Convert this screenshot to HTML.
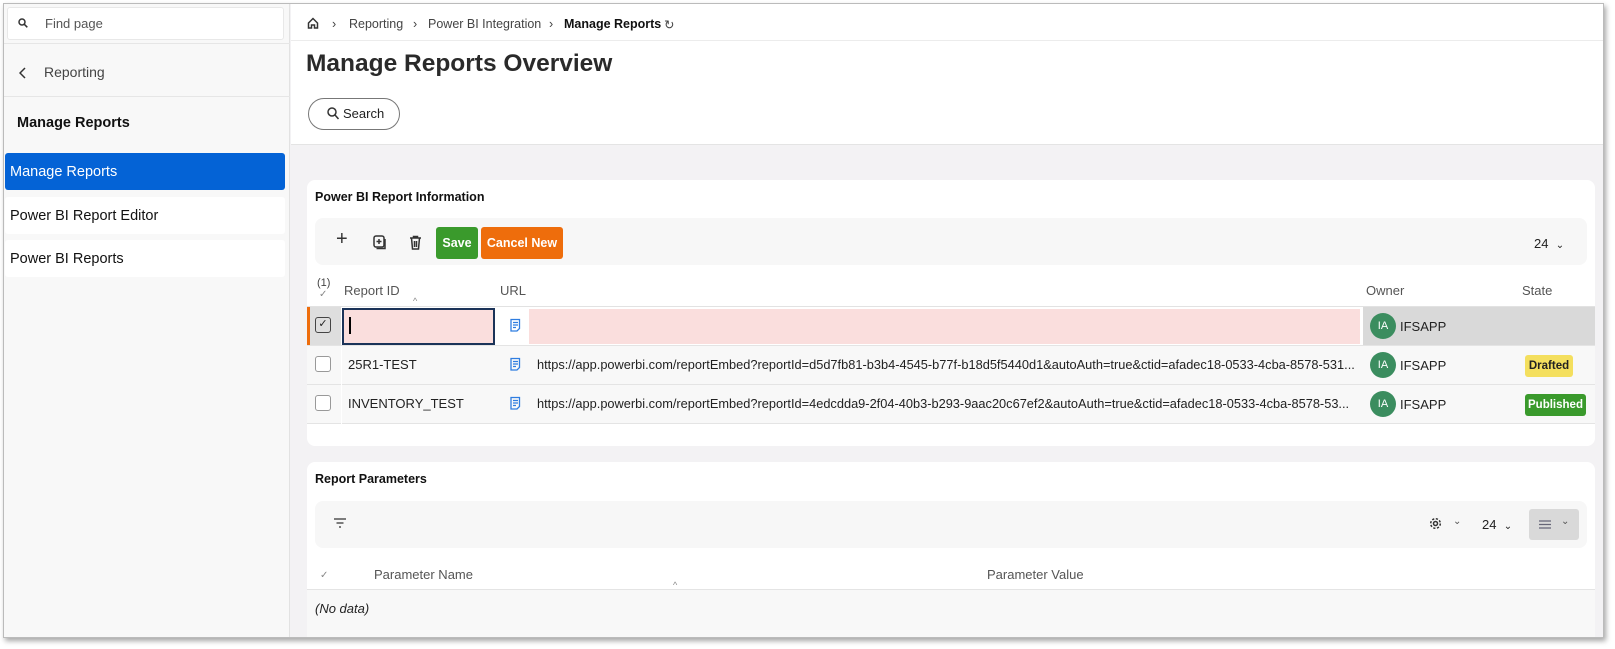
<!DOCTYPE html>
<html><head><style>
*{box-sizing:border-box;margin:0;padding:0}
body{width:1615px;height:649px;background:#fff;font-family:"Liberation Sans",sans-serif;color:#222;position:relative;overflow:hidden;font-size:13px}
.frame{position:absolute;left:3px;top:3px;width:1601px;height:635px;border:1px solid #bbb;box-shadow:2px 3px 5px rgba(0,0,0,.35);background:#f3f2f4;overflow:hidden}
.a{position:absolute}
.side{left:0;top:0;width:286px;height:100%;background:#f8f8f8;border-right:1px solid #e2e2e2}
.item{position:absolute;left:1px;width:280px;height:37px;background:#fff;border-radius:3px;font-size:14.5px;padding:11px 5px;color:#111}
.ico{stroke:#333;fill:none;stroke-width:1.5}
.bc{position:absolute;top:13px;font-size:12.5px;color:#444}
</style></head><body>
<div class="frame">
 <div class="a side">
  <div class="a" style="left:3px;top:3px;width:277px;height:33px;background:#fff;border:1px solid #e8e8e8;border-radius:3px"></div>
  <svg class="a" style="left:14px;top:14px" width="10" height="10"><circle cx="4" cy="4" r="3" class="ico" stroke-width="1.2"/><path d="M6.3 6.3l3 3" class="ico" stroke-width="1.2"/></svg>
  <div class="a" style="left:41px;top:12px;color:#555">Find page</div>
  <div class="a" style="left:0;top:39px;width:286px;border-top:1px solid #e6e6e6"></div>
  <svg class="a" style="left:15px;top:63px" width="8" height="12"><path d="M6 1L1 6l5 5" class="ico" stroke="#555"/></svg>
  <div class="a" style="left:40px;top:60px;font-size:14px;color:#444">Reporting</div>
  <div class="a" style="left:0;top:92px;width:286px;border-top:1px solid #e6e6e6"></div>
  <div class="a" style="left:13px;top:111px;font-size:14.5px;font-weight:bold;color:#111">Manage Reports</div>
  <div class="item" style="top:149px;background:#0463d6;color:#fff">Manage Reports</div>
  <div class="item" style="top:193px">Power BI Report Editor</div>
  <div class="item" style="top:236px">Power BI Reports</div>
 </div>
 <div class="a" style="left:287px;top:0;right:0;height:141px;background:#fff;border-bottom:1px solid #e4e4e4"></div>
 <div class="a" style="left:287px;top:36px;right:0;border-top:1px solid #ececec"></div>
 <svg class="a" style="left:303px;top:13px" width="12" height="12"><path d="M1.5 6L6 1.5 10.5 6V11H7.5V8h-3v3h-3z" class="ico" stroke-width="1.2"/></svg>
 <div class="bc" style="left:328px">›</div>
 <div class="bc" style="left:345px">Reporting</div>
 <div class="bc" style="left:409px">›</div>
 <div class="bc" style="left:424px">Power BI Integration</div>
 <div class="bc" style="left:545px">›</div>
 <div class="bc" style="left:560px;font-weight:bold;color:#111">Manage Reports</div>
 <div class="bc" style="left:660px">↻</div>
 <div class="a" style="left:302px;top:46px;font-size:24.5px;font-weight:bold;color:#2a2a2a">Manage Reports Overview</div>
 <div class="a" style="left:304px;top:94px;width:92px;height:32px;border:1px solid #777;border-radius:16px;background:#fff"></div>
 <svg class="a" style="left:323px;top:103px" width="12" height="13"><circle cx="5" cy="5" r="4" class="ico"/><path d="M8 8l3.5 4" class="ico"/></svg>
 <div class="a" style="left:339px;top:102px;font-size:13px">Search</div>

 <div class="a" style="left:303px;top:176px;width:1288px;height:266px;background:#fff;border-radius:8px"></div>
 <div class="a" style="left:311px;top:186px;font-weight:bold;font-size:12.5px;color:#111">Power BI Report Information</div>
 <div class="a" style="left:311px;top:214px;width:1272px;height:47px;background:#f7f7f7;border-radius:8px"></div>
 <div class="a" style="left:332px;top:224px;font-size:20px;color:#333">+</div>
 <svg class="a" style="left:369px;top:231px" width="14" height="15"><rect x="1" y="1" width="10" height="11" rx="2" class="ico" stroke-width="1.3"/><path d="M3.5 13.5h8.5V4M6 4v5M3.5 6.5h5" class="ico" stroke-width="1.3"/></svg>
 <svg class="a" style="left:405px;top:231px" width="13" height="15"><path d="M1 3h11M4.5 3V1.5h4V3M2.5 3l1 11h6l1-11M5.5 6v6M7.5 6v6" class="ico" stroke-width="1.3"/></svg>
 <div class="a" style="left:432px;top:223px;width:42px;height:32px;background:#3a9a2c;border-radius:3px;color:#fff;font-weight:bold;font-size:12.5px;text-align:center;line-height:32px">Save</div>
 <div class="a" style="left:477px;top:223px;width:82px;height:32px;background:#ee6d0c;border-radius:3px;color:#fff;font-weight:bold;font-size:12.5px;text-align:center;line-height:32px">Cancel New</div>
 <div class="a" style="left:1530px;top:232px;font-size:13px">24&nbsp;&nbsp;<span style="font-size:10px">⌄</span></div>

 <div class="a" style="left:313px;top:273px;font-size:11px;color:#444">(1)</div>
 <div class="a" style="left:315px;top:285px;font-size:10px;color:#888">✓</div>
 <div class="a" style="left:340px;top:279px;color:#555">Report ID</div>
 <div class="a" style="left:409px;top:292px;font-size:9px;color:#888">^</div>
 <div class="a" style="left:496px;top:279px;color:#555">URL</div>
 <div class="a" style="left:1362px;top:279px;color:#555">Owner</div>
 <div class="a" style="left:1518px;top:279px;color:#555">State</div>
 <div class="a" style="left:303px;top:302px;width:1288px;border-top:1px solid #e2e2e2"></div>

 <div class="a" style="left:303px;top:303px;width:1288px;height:38px;background:#fff"></div>
 <div class="a" style="left:303px;top:303px;width:34px;height:38px;background:#dedede;border-left:3px solid #ee6d0c"></div>
 <div class="a" style="left:311px;top:313px;width:16px;height:16px;border:1.5px solid #444;border-radius:3px;font-size:11px;line-height:13px;text-align:center">✓</div>
 <div class="a" style="left:338px;top:304px;width:153px;height:37px;background:#fadedd;border:2px solid #1b3358"></div>
 <div class="a" style="left:345px;top:313px;width:2px;height:17px;background:#000"></div>
 <div class="a" style="left:525px;top:305px;width:831px;height:35px;background:#fadedd"></div>
 <div class="a" style="left:1359px;top:303px;width:232px;height:38px;background:#d9d9d9"></div>

 <div class="a" style="left:303px;top:342px;width:1288px;height:78px;background:#f8f8f8"></div>
 <div class="a" style="left:303px;top:380px;width:1288px;border-top:1px solid #e4e4e4"></div>
 <div class="a" style="left:303px;top:419px;width:1288px;border-top:1px solid #e4e4e4"></div>
 <div class="a" style="left:303px;top:341px;width:1288px;border-top:1px solid #e4e4e4"></div>
 <div class="a" style="left:311px;top:352px;width:16px;height:16px;border:1px solid #999;border-radius:3px;background:#fff"></div>
 <div class="a" style="left:311px;top:391px;width:16px;height:16px;border:1px solid #999;border-radius:3px;background:#fff"></div>
 <div class="a" style="left:337px;top:342px;width:1px;height:78px;background:#fff"></div>
 <div class="a" style="left:344px;top:353px">25R1-TEST</div>
 <div class="a" style="left:344px;top:392px">INVENTORY_TEST</div>
 <div class="a" style="left:533px;top:353px;white-space:nowrap;font-size:12.8px">https://app.powerbi.com/reportEmbed?reportId=d5d7fb81-b3b4-4545-b77f-b18d5f5440d1&amp;autoAuth=true&amp;ctid=afadec18-0533-4cba-8578-531...</div>
 <div class="a" style="left:533px;top:392px;white-space:nowrap;font-size:12.8px">https://app.powerbi.com/reportEmbed?reportId=4edcdda9-2f04-40b3-b293-9aac20c67ef2&amp;autoAuth=true&amp;ctid=afadec18-0533-4cba-8578-53...</div>
 <svg class="a" style="left:506px;top:314px" width="11" height="14"><path d="M1 1.5h8.5v9L7 13H1zM3 4.5h5M3 7h5M3 9.5h3" fill="none" stroke="#2f7de0" stroke-width="1.3"/></svg>
 <svg class="a" style="left:506px;top:353px" width="11" height="14"><path d="M1 1.5h8.5v9L7 13H1zM3 4.5h5M3 7h5M3 9.5h3" fill="none" stroke="#2f7de0" stroke-width="1.3"/></svg>
 <svg class="a" style="left:506px;top:392px" width="11" height="14"><path d="M1 1.5h8.5v9L7 13H1zM3 4.5h5M3 7h5M3 9.5h3" fill="none" stroke="#2f7de0" stroke-width="1.3"/></svg>
 <div class="a" style="left:1366px;top:309px;width:26px;height:26px;border-radius:50%;background:#3b8d5f;color:#fff;font-size:11px;line-height:26px;text-align:center">IA</div>
 <div class="a" style="left:1366px;top:348px;width:26px;height:26px;border-radius:50%;background:#3b8d5f;color:#fff;font-size:11px;line-height:26px;text-align:center">IA</div>
 <div class="a" style="left:1366px;top:387px;width:26px;height:26px;border-radius:50%;background:#3b8d5f;color:#fff;font-size:11px;line-height:26px;text-align:center">IA</div>
 <div class="a" style="left:1396px;top:315px">IFSAPP</div>
 <div class="a" style="left:1396px;top:354px">IFSAPP</div>
 <div class="a" style="left:1396px;top:393px">IFSAPP</div>
 <div class="a" style="left:1521px;top:351px;width:48px;height:22px;background:#f4df5e;border-radius:3px;font-weight:bold;font-size:11.5px;line-height:22px;text-align:center">Drafted</div>
 <div class="a" style="left:1521px;top:390px;width:61px;height:22px;background:#3a9a2c;color:#fff;border-radius:3px;font-weight:bold;font-size:11.5px;line-height:22px;text-align:center">Published</div>

 <div class="a" style="left:303px;top:458px;width:1288px;height:200px;background:#fff;border-radius:8px"></div>
 <div class="a" style="left:311px;top:468px;font-weight:bold;font-size:12.5px;color:#111">Report Parameters</div>
 <div class="a" style="left:311px;top:497px;width:1272px;height:47px;background:#f7f7f7;border-radius:8px"></div>
 <svg class="a" style="left:330px;top:514px" width="12" height="10"><path d="M0 1h12M2.5 5h7M5 9h2" stroke="#333" stroke-width="1.3"/></svg>
 <svg class="a" style="left:1425px;top:513px" width="13" height="13"><circle cx="6.5" cy="6.5" r="2" class="ico" stroke-width="1.2"/><circle cx="6.5" cy="6.5" r="4.8" class="ico" stroke-width="1.8" stroke-dasharray="2.2 1.6"/></svg>
 <div class="a" style="left:1449px;top:512px;font-size:10px;color:#555">⌄</div>
 <div class="a" style="left:1478px;top:513px;font-size:13px">24&nbsp;&nbsp;<span style="font-size:10px">⌄</span></div>
 <div class="a" style="left:1525px;top:505px;width:50px;height:31px;background:#d9d9d9;border-radius:3px"></div>
 <svg class="a" style="left:1535px;top:516px" width="12" height="9"><path d="M0 1h12M0 4.5h12M0 8h12" stroke="#667" stroke-width="1.2"/></svg>
 <div class="a" style="left:1557px;top:512px;font-size:10px;color:#555">⌄</div>
 <div class="a" style="left:316px;top:566px;font-size:10px;color:#888">✓</div>
 <div class="a" style="left:370px;top:563px;color:#555">Parameter Name</div>
 <div class="a" style="left:669px;top:576px;font-size:9px;color:#888">^</div>
 <div class="a" style="left:983px;top:563px;color:#555">Parameter Value</div>
 <div class="a" style="left:303px;top:585px;width:1288px;height:60px;background:#f8f8f8;border-top:1px solid #e4e4e4"></div>
 <div class="a" style="left:311px;top:597px;font-style:italic">(No data)</div>
</div>
</body></html>
